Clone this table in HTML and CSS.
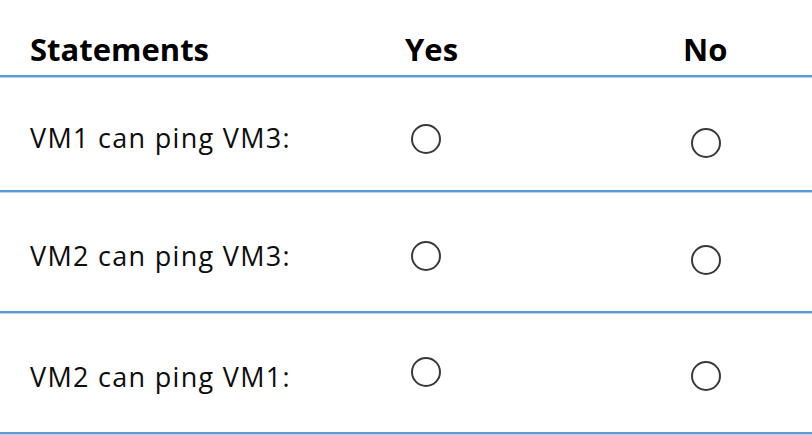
FILE: index.html
```html
<!DOCTYPE html>
<html lang="en">
<head>
<meta charset="utf-8">
<title>Statements</title>
<link rel="stylesheet" href="styles.css">
</head>
<body>
<div class="table">
  <div class="row head">
    <div class="cell stmt">Statements</div>
    <div class="cell yes">Yes</div>
    <div class="cell no">No</div>
  </div>
  <div class="row item r1">
    <div class="cell stmt">VM1 can ping VM3:</div>
    <div class="cell yes"><span class="radio"></span></div>
    <div class="cell no"><span class="radio"></span></div>
  </div>
  <div class="row item r2">
    <div class="cell stmt">VM2 can ping VM3:</div>
    <div class="cell yes"><span class="radio"></span></div>
    <div class="cell no"><span class="radio"></span></div>
  </div>
  <div class="row item r3">
    <div class="cell stmt">VM2 can ping VM1:</div>
    <div class="cell yes"><span class="radio"></span></div>
    <div class="cell no"><span class="radio"></span></div>
  </div>
</div>
</body>
</html>
```

FILE: styles.css
```css
html, body {
  margin: 0;
  padding: 0;
  background: #ffffff;
}

body {
  font-family: "Open Sans", "Liberation Sans", sans-serif;
  color: #0d0d0d;
  width: 812px;
  height: 435px;
  overflow: hidden;
}

.table {
  display: flex;
  flex-direction: column;
}

.row {
  display: grid;
  grid-template-columns: 400px 280px 1fr;
  align-items: center;
  box-sizing: border-box;
  border-bottom: 2px solid #5b9bd5;
  box-shadow: 0 1px 0 #b8d4ee;
  position: relative;
}

.row::before {
  content: "";
  position: absolute;
  left: 0;
  right: 0;
  bottom: -3px;
  height: 1px;
  background: #b8d4ee;
}

.head {
  height: 77px;
  font-weight: 700;
  font-size: 31px;
  color: #000000;
  align-items: start;
}

.head .cell {
  padding-top: 27px;
  line-height: 44px;
}

.item {
  padding-top: 8px;
  font-size: 27px;
  letter-spacing: 1.3px;
}

.r1 { height: 115px; }
.r2, .r3 { height: 121px; }

.stmt {
  padding-left: 30px;
}

.head .yes { padding-left: 5px; }
.head .no { padding-left: 3px; }

.radio {
  display: block;
  width: 26px;
  height: 26px;
  border: 2px solid #3a3a3a;
  border-radius: 50%;
}

.yes .radio { margin-left: 11px; }
.no .radio { margin-left: 11px; margin-top: 8px; }

.r1 .yes .radio { margin-top: 3px; }
.r1 .no .radio { margin-top: 11px; }
.r3 .yes .radio { margin-top: -10px; }
.r3 .no .radio { margin-top: -1px; }
```
